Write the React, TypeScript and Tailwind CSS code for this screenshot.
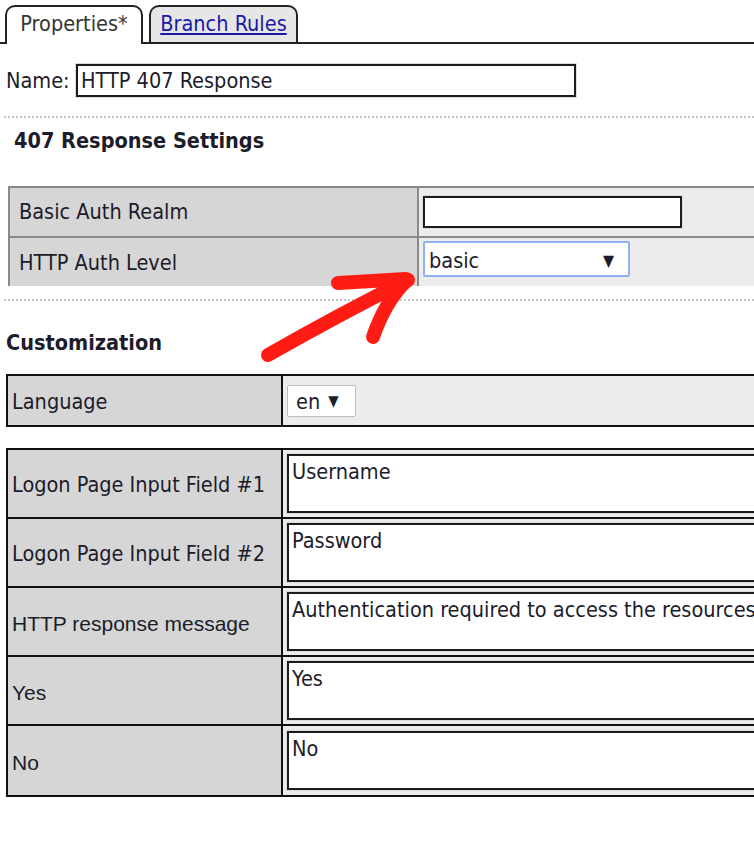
import React from "react";

const tahoma = { fontFamily: '"DejaVu Sans Condensed", "DejaVu Sans", sans-serif' };
const arial = { fontFamily: '"Liberation Sans", Arial, sans-serif', fontSize: "21px" };

function Arrow() {
  return (
    <svg className="pointer-events-none absolute left-0 top-0" width="754" height="860">
      <g fill="none" stroke="#ff1c14" strokeWidth="14" strokeLinecap="round" strokeLinejoin="round">
        <path d="M268 355 Q 340 314 408 280" />
        <path d="M338 283 L 406 279" />
        <path d="M406 281 Q 385 302 373 337" />
      </g>
    </svg>
  );
}

function Dotted() {
  return <div className="ml-1 border-t-2 border-dotted border-[#c4c4c4]" />;
}

function Textbox({ text }: { text: string }) {
  return (
    <div className="h-[59px] flex-1 overflow-hidden whitespace-nowrap border-2 border-[#1c1c1c] bg-white pl-[3px] pt-[5px] shadow-[0_0_0_1px_#dcdcdc]">
      {text}
    </div>
  );
}

const fieldRows = [
  { label: "Logon Page Input Field #1", value: "Username", arial: false },
  { label: "Logon Page Input Field #2", value: "Password", arial: false },
  { label: "HTTP response message", value: "Authentication required to access the resources", arial: true },
  { label: "Yes", value: "Yes", arial: true },
  { label: "No", value: "No", arial: true },
];

export default function App() {
  return (
    <div className="relative h-[860px] w-[754px] overflow-hidden bg-white text-[21.5px] leading-none text-[#1c1c2a]" style={tahoma}>
      {/* tabs */}
      <div className="flex h-[44px] items-end">
        <div className="h-full w-[5px] border-b-2 border-[#222]" />
        <div className="flex h-[39px] w-[138px] items-center justify-center rounded-t-[10px] border-2 border-b-0 border-[#222] bg-white pb-[4px] text-[#333]">
          Properties*
        </div>
        <div className="h-full w-[6px] border-b-2 border-[#222]" />
        <div className="flex h-[39px] flex-col border-b-2 border-[#222]">
          <div className="flex h-full w-[149px] items-center justify-center rounded-t-[10px] border-2 border-b-0 border-[#222] bg-[#e6e6e6] pb-[2px] text-[#1a1aa6] underline">
            Branch Rules
          </div>
        </div>
        <div className="h-full flex-1 border-b-2 border-[#222]" />
      </div>

      {/* name */}
      <div className="mt-[20px] flex h-[33px] items-center">
        <span className="ml-[6px] w-[70px]">Name:</span>
        <div className="flex h-[33px] w-[500px] items-center border-2 border-[#1c1c1c] pl-[3px] shadow-[0_0_0_1px_#dcdcdc]">
          HTTP 407 Response
        </div>
      </div>

      <div className="mt-[19px]">
        <Dotted />
      </div>

      <div className="ml-[14px] mt-[11px] flex h-[24px] items-center font-bold">407 Response Settings</div>

      {/* 407 settings table */}
      <div className="ml-[8px] mt-[33px] w-[800px] border-l-2 border-t-2 border-[#8a8a8a]">
        <div className="flex h-[50px] border-b-2 border-[#8a8a8a]">
          <div className="flex w-[409px] items-center border-r-2 border-[#8a8a8a] bg-[#d6d6d6] pl-[9px]">Basic Auth Realm</div>
          <div className="flex flex-1 items-center bg-[#ececec] pl-[4px]">
            <div className="h-[32px] w-[259px] border-2 border-[#1c1c1c] bg-white shadow-[0_0_0_1px_#dcdcdc]" />
          </div>
        </div>
        <div className="flex h-[48px]">
          <div className="flex w-[409px] items-center border-r-2 border-[#8a8a8a] bg-[#d6d6d6] pl-[9px] pt-[2px]">HTTP Auth Level</div>
          <div className="flex flex-1 items-start bg-[#ececec] pl-[4px] pt-[3px]">
            <div className="flex h-[36px] w-[207px] items-center justify-between rounded-[2px] border-2 border-[#8fb3f0] bg-white pl-[4px] pr-[14px] pt-[3px]">
              <span>basic</span>
              <span className="text-[16px]">▼</span>
            </div>
          </div>
        </div>
      </div>

      <div className="mt-[13px]">
        <Dotted />
      </div>

      <div className="ml-[6px] mt-[30px] flex h-[24px] items-center font-bold">Customization</div>

      {/* language */}
      <div className="ml-[6px] mt-[19px] flex h-[53px] w-[800px] border-2 border-[#111]">
        <div className="flex w-[275px] items-center border-r-2 border-[#111] bg-[#d6d6d6] pl-[4px] pt-[3px]">Language</div>
        <div className="flex flex-1 items-center bg-[#ececec] pl-[4px]">
          <div className="flex h-[32px] w-[69px] items-center gap-[8px] rounded-[2px] border border-[#bdbdbd] bg-white pl-[8px] pt-[2px]">
            <span>en</span>
            <span className="text-[15px]">▼</span>
          </div>
        </div>
      </div>

      {/* customization fields */}
      <div className="ml-[6px] mt-[21px] w-[800px] border-2 border-[#111]">
        {fieldRows.map((r, i) => (
          <div key={r.label} className={`flex h-[69px] ${i < fieldRows.length - 1 ? "border-b-2 border-[#111]" : ""}`}>
            <div className="flex w-[275px] items-center border-r-2 border-[#111] bg-[#d6d6d6] pl-[4px] pt-[3px]" style={r.arial ? arial : undefined}>
              {r.label}
            </div>
            <div className="flex flex-1 items-center bg-[#ececec] pl-[4px]">
              <Textbox text={r.value} />
            </div>
          </div>
        ))}
      </div>

      <Arrow />
    </div>
  );
}
